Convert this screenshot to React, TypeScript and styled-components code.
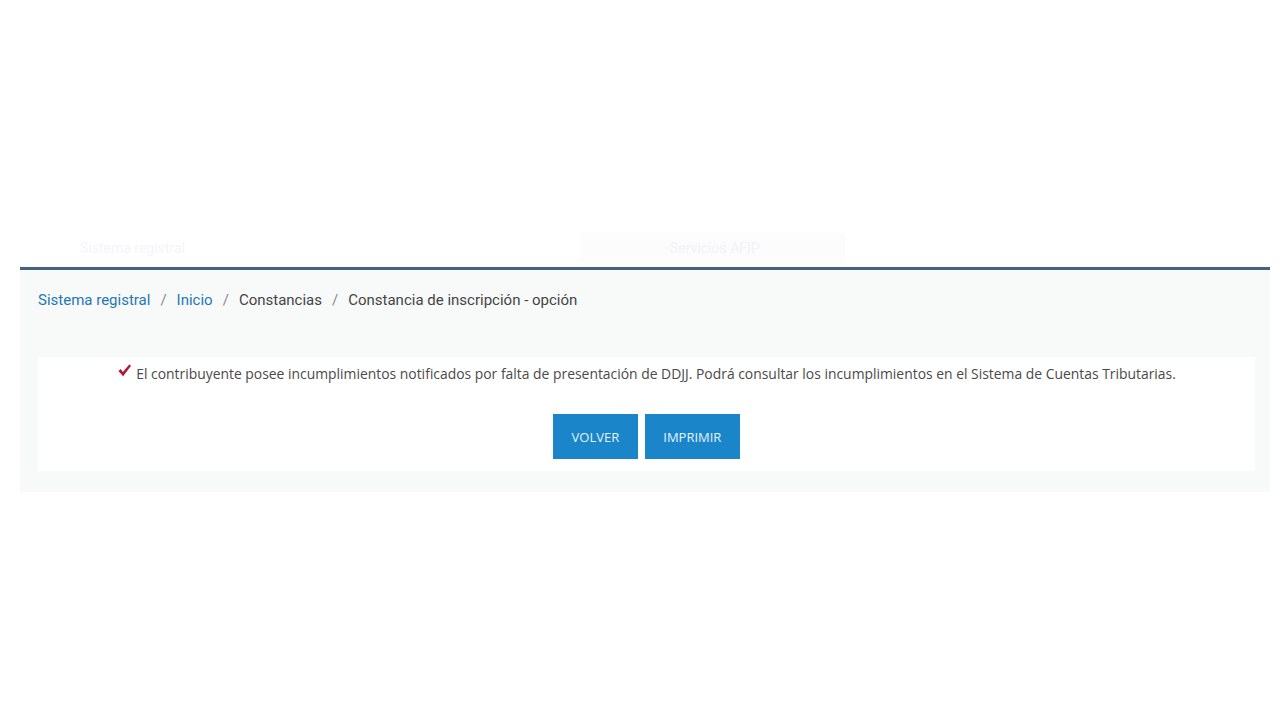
import React from "react";
import styled, { createGlobalStyle } from "styled-components";

const Global = createGlobalStyle`
  html, body { margin: 0; padding: 0; background: #ffffff; }
  body { font-family: "Open Sans", "Liberation Sans", sans-serif; }
`;

const Page = styled.div`
  width: 1250px;
  margin-left: 20px;
  padding-top: 228px;
`;

const GhostHeader = styled.div`
  height: 39px;
  display: flex;
  align-items: center;
  gap: 20px;
  padding-left: 60px;
  box-sizing: border-box;
`;

const GhostText = styled.span<{ $w: number }>`
  display: inline-block;
  width: ${(p) => p.$w}px;
  font-family: Roboto, sans-serif;
  font-size: 14px;
  color: #f3f5f7;
`;

const GhostBox = styled.div`
  margin-left: 330px;
  width: 265px;
  height: 30px;
  background: #fcfcfd;
  display: flex;
  align-items: center;
  padding-left: 90px;
  box-sizing: border-box;
  font-family: Roboto, sans-serif;
  font-size: 14px;
  color: #f1f3f5;
`;

const Panel = styled.section`
  border-top: 3px solid #44637f;
  background: #f8f9f9;
  padding: 19px 15px 21px 18px;
`;

const Breadcrumb = styled.nav`
  font-family: Roboto, "Liberation Sans", sans-serif;
  font-size: 15px;
  line-height: 22px;
  color: #444;
  display: flex;
  align-items: center;
`;

const Crumb = styled.span<{ $link?: boolean }>`
  color: ${(p) => (p.$link ? "#1e78b4" : "#454545")};
`;

const Sep = styled.span`
  color: #8a8a8a;
  margin: 0 10px;
`;

const Card = styled.div`
  margin-top: 46px;
  background: #ffffff;
  padding: 7px 0 12px;
  display: flex;
  flex-direction: column;
  align-items: center;
`;

const Message = styled.p`
  margin: 0;
  font-size: 13.9px;
  line-height: 20px;
  color: #4a4a4a;
  display: flex;
  align-items: center;
  gap: 4px;
`;

const Check = styled.svg`
  width: 15px;
  height: 15px;
  margin-top: -7px;
`;

const Actions = styled.div`
  margin-top: 30px;
  display: flex;
  gap: 7px;
`;

const Button = styled.button`
  height: 45px;
  padding: 0 18.5px;
  border: none;
  background: #1a86c9;
  color: #e3f1fb;
  font-family: "Open Sans", sans-serif;
  font-size: 13px;
  text-transform: uppercase;
  cursor: pointer;
`;

export default function App() {
  return (
    <>
      <Global />
      <Page>
        <GhostHeader>
          <GhostText $w={150}>Sistema registral</GhostText>
          <GhostBox>Servicios AFIP</GhostBox>
        </GhostHeader>
        <Panel>
          <Breadcrumb>
            <Crumb $link>Sistema registral</Crumb>
            <Sep>/</Sep>
            <Crumb $link>Inicio</Crumb>
            <Sep>/</Sep>
            <Crumb>Constancias</Crumb>
            <Sep>/</Sep>
            <Crumb>Constancia de inscripción - opción</Crumb>
          </Breadcrumb>
          <Card>
            <Message>
              <Check viewBox="0 0 16 16">
                <path d="M1.5 8.5 L4 6.5 L6.3 9.5 L13 1.5 L15 3 L6.5 14 Z" fill="#b3163a" />
              </Check>
              El contribuyente posee incumplimientos notificados por falta de presentación de DDJJ. Podrá consultar los incumplimientos en el Sistema de Cuentas Tributarias.
            </Message>
            <Actions>
              <Button>Volver</Button>
              <Button>Imprimir</Button>
            </Actions>
          </Card>
        </Panel>
      </Page>
    </>
  );
}
